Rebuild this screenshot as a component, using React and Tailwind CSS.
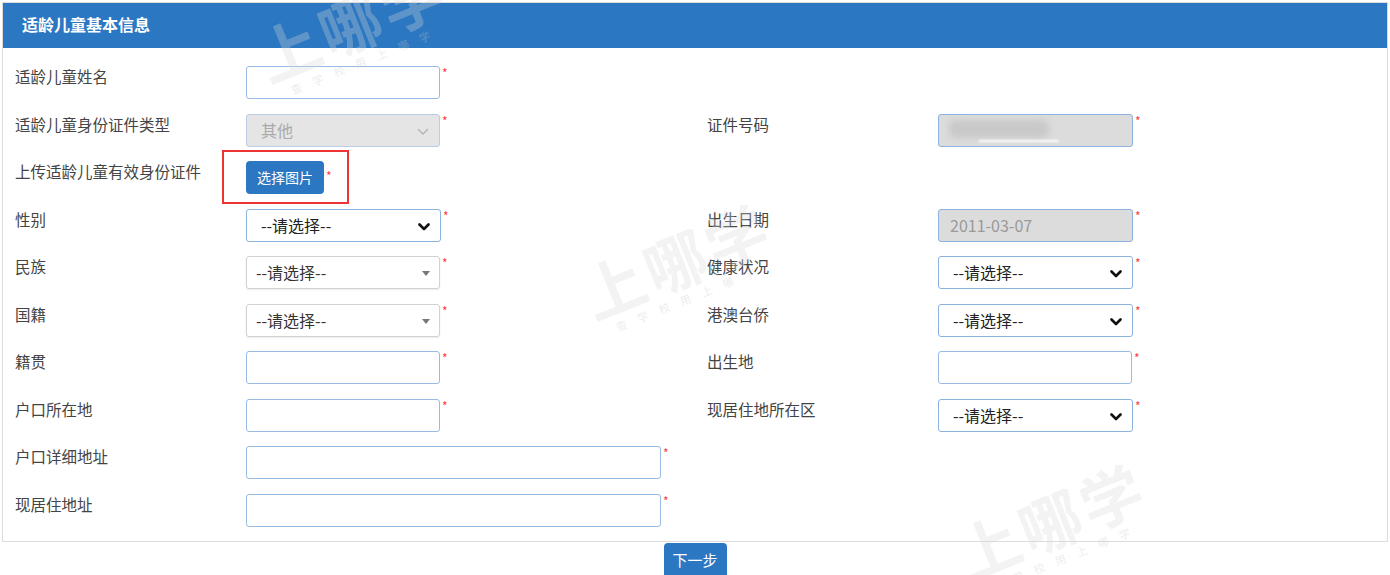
import React from "react";

const font = { fontFamily: '"Noto Sans CJK SC", "Noto Sans", sans-serif' };

const Star = () => (
  <span className="ml-[2px] self-start text-[12px] leading-[14px] text-[#ff3b3b]">*</span>
);

const Chevron = ({ light }) => (
  <svg width="12" height="8" viewBox="0 0 12 8" className="absolute right-[10px] top-[13px]">
    <path
      d="M1.5 1.5 L6 6 L10.5 1.5"
      fill="none"
      stroke={light ? "#b5b5b5" : "#111"}
      strokeWidth={light ? "1.5" : "2.6"}
      strokeLinecap="round"
      strokeLinejoin="round"
    />
  </svg>
);

const TextInput = ({ wide }) => (
  <div className="flex">
    <div
      className={
        (wide ? "w-[415px]" : "w-[194px]") +
        " h-[33px] rounded-[3px] border border-[#98bbe4] bg-white"
      }
    />
    <Star />
  </div>
);

const NativeSelect = () => (
  <div className="flex">
    <div className="relative h-[33px] w-[195px] rounded-[3px] border border-[#8cb2e0] bg-white pl-[14px] text-[16px] leading-[31px] text-[#222]">
      --请选择--
      <Chevron />
    </div>
    <Star />
  </div>
);

const Select2 = () => (
  <div className="flex">
    <div className="relative h-[33px] w-[194px] rounded-[3px] border border-[#d2d2d2] bg-white pl-[9px] text-[16px] leading-[31px] text-[#333] shadow-[0_1px_2px_rgba(0,0,0,0.08)]">
      --请选择--
      <span className="absolute right-[9px] top-[14px] h-0 w-0 border-x-[4px] border-t-[5px] border-x-transparent border-t-[#777]" />
    </div>
    <Star />
  </div>
);

const Label = ({ children }) => (
  <div className="-mt-[1px] w-[231px] shrink-0 text-[15.5px] leading-[22px] text-[#444]">{children}</div>
);

const Cell = ({ label, children }) => (
  <div className="flex pl-[12px]">
    {label ? <Label>{label}</Label> : null}
    {children}
  </div>
);

const Row = ({ children }) => <div className="grid h-[47.5px] grid-cols-2">{children}</div>;

const Watermark = ({ className }) => (
  <div className={"pointer-events-none absolute z-20 -rotate-[22deg] " + className}>
    <div className="text-[62px] font-bold leading-[66px] tracking-[4px] text-[rgba(215,215,215,0.3)]">上哪学</div>
    <div className="ml-[18px] text-[11px] tracking-[12px] text-[rgba(200,200,200,0.35)]">查学校用上哪学</div>
  </div>
);

export default function App() {
  return (
    <div className="relative h-[575px] w-[1390px] overflow-hidden bg-white" style={font}>
      <div className="mx-[2px] mt-[2px] border border-[#dcdcdc]">
        <div className="flex h-[45px] items-center bg-[#2b77c2] pb-[3px] pl-[19px] text-[16px] font-bold text-white">
          适龄儿童基本信息
        </div>
        <div className="pt-[18px]">
          <Row>
            <Cell label="适龄儿童姓名">
              <TextInput />
            </Cell>
            <div />
          </Row>
          <Row>
            <Cell label="适龄儿童身份证件类型">
              <div className="flex">
                <div className="relative h-[33px] w-[194px] rounded-[3px] border border-[#b9cde6] bg-[#e5e5e5] pl-[14px] text-[16px] leading-[31px] text-[#aaa]">
                  其他
                  <Chevron light />
                </div>
                <Star />
              </div>
            </Cell>
            <Cell label="证件号码">
              <div className="flex">
                <div className="relative h-[33px] w-[195px] overflow-hidden rounded-[3px] border border-[#8cb2e0] bg-[#dcdcdc]">
                  <div className="absolute left-[10px] top-[5px] h-[18px] w-[100px] rounded-[6px] bg-[#c9c9c9] blur-[3px]" />
                  <div className="absolute left-[40px] top-[25px] h-[2px] w-[80px] bg-white blur-[1px]" />
                </div>
                <Star />
              </div>
            </Cell>
          </Row>
          <Row>
            <Cell label="上传适龄儿童有效身份证件">
              <div className="relative flex">
                <button className="h-[33px] w-[78px] rounded-[4px] bg-[#2b77c2] text-[14px] text-white">
                  选择图片
                </button>
                <span className="ml-[2px] mt-[8px] self-start text-[12px] leading-[14px] text-[#ff3b3b]">*</span>
                <div className="absolute left-[-24px] top-[-11px] h-[54px] w-[127px] border-2 border-[#ee3333]" />
              </div>
            </Cell>
            <div />
          </Row>
          <Row>
            <Cell label="性别">
              <NativeSelect />
            </Cell>
            <Cell label="出生日期">
              <div className="flex">
                <div className="h-[33px] w-[195px] rounded-[3px] border border-[#8cb2e0] bg-[#dcdcdc] pl-[11px] text-[16px] leading-[31px] text-[#9a9a9a]">
                  2011-03-07
                </div>
                <Star />
              </div>
            </Cell>
          </Row>
          <Row>
            <Cell label="民族">
              <Select2 />
            </Cell>
            <Cell label="健康状况">
              <NativeSelect />
            </Cell>
          </Row>
          <Row>
            <Cell label="国籍">
              <Select2 />
            </Cell>
            <Cell label="港澳台侨">
              <NativeSelect />
            </Cell>
          </Row>
          <Row>
            <Cell label="籍贯">
              <TextInput />
            </Cell>
            <Cell label="出生地">
              <TextInput />
            </Cell>
          </Row>
          <Row>
            <Cell label="户口所在地">
              <TextInput />
            </Cell>
            <Cell label="现居住地所在区">
              <NativeSelect />
            </Cell>
          </Row>
          <Row>
            <Cell label="户口详细地址">
              <TextInput wide />
            </Cell>
            <div />
          </Row>
          <Row>
            <Cell label="现居住地址">
              <TextInput wide />
            </Cell>
            <div />
          </Row>
        </div>
      </div>
      <div className="flex justify-center pt-[1px]">
        <button className="h-[34px] w-[63px] rounded-t-[4px] bg-[#2b77c2] text-[15px] text-white">下一步</button>
      </div>

      <Watermark className="left-[255px] top-[-12px]" />
      <Watermark className="left-[580px] top-[225px]" />
      <Watermark className="left-[955px] top-[485px]" />
    </div>
  );
}
